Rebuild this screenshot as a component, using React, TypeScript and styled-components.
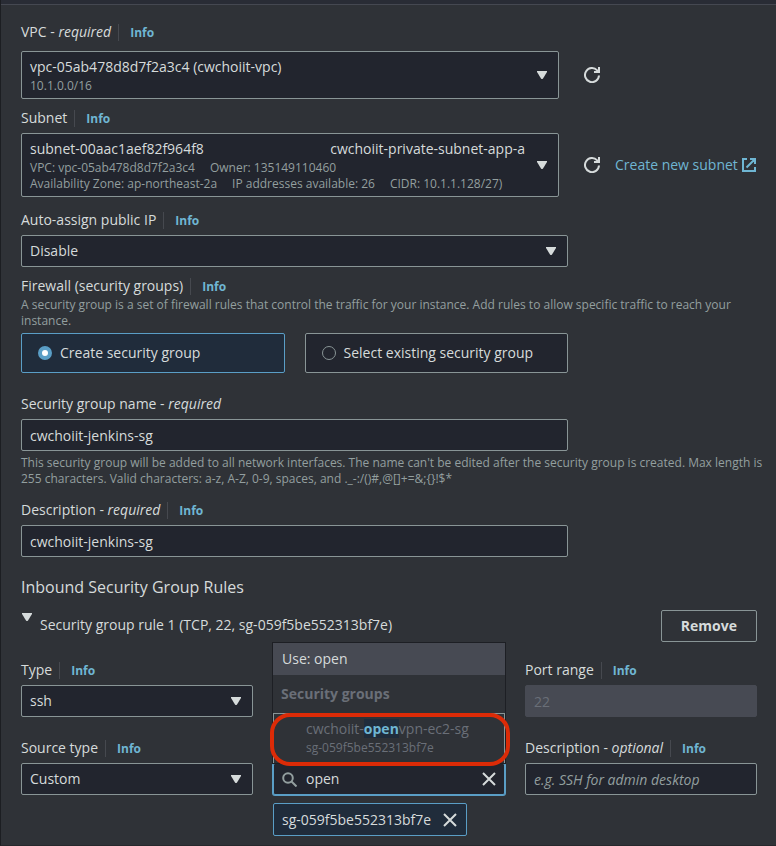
import React, { useState } from 'react';
import styled, { createGlobalStyle, css } from 'styled-components';

const color = {
  page: '#2f3237',
  field: '#22252e',
  border: '#899596',
  text: '#d6dbdb',
  muted: '#939f9f',
  dim: '#6a6f78',
  link: '#6fb6d3',
  accent: '#5a9ec6',
  selected: '#202c3b',
  raised: '#474a53',
  divider: '#46494f',
};

const GlobalStyle = createGlobalStyle`
  * { box-sizing: border-box; }
  body {
    margin: 0;
    background: ${color.page};
    color: ${color.text};
    font: 500 14px/20px "Open Sans", "Noto Sans", sans-serif;
  }
  button, input, select { font: inherit; color: inherit; margin: 0; }
`;

const Panel = styled.main`
  min-height: 100vh;
  border-left: 1px solid #1c1e22;
  border-bottom: 1px solid #26282c;
`;

const TopEdge = styled.div`
  height: 5px;
  background: #292c35;
  border-bottom: 1px solid #454851;
`;

const Form = styled.form`
  padding: 17px 19px 8px 20px;
  display: flex;
  flex-direction: column;
`;

const Field = styled.div<{ $gap?: number; $after?: number }>`
  display: flex;
  flex-direction: column;
  gap: ${(p) => p.$gap ?? 5}px;
  margin-bottom: ${(p) => p.$after ?? 0}px;
  min-width: 0;
`;

const LabelRow = styled.div`
  display: flex;
  align-items: center;
  height: 20px;
  white-space: nowrap;
`;

const InfoLink = styled.a`
  display: flex;
  align-items: center;
  height: 17px;
  margin-left: 7px;
  padding: 2px 0 0 11px;
  border-left: 1px solid ${color.divider};
  color: ${color.link};
  font-size: 12px;
  font-weight: 700;
  text-decoration: none;
`;

const Help = styled.p`
  margin: 0 -8px 0 0;
  color: ${color.muted};
  font-size: 12px;
  line-height: 16px;
`;

const Quarters = styled.div`
  display: grid;
  grid-template-columns: repeat(4, minmax(0, 1fr));
  column-gap: 20px;
`;

const ThreeQuarters = styled.div`
  grid-column: span 3;
  display: flex;
  flex-direction: column;
`;

const PickerRow = styled.div`
  display: grid;
  grid-template-columns: minmax(0, 538fr) minmax(0, 198fr);
  align-items: center;
`;

const Actions = styled.div`
  display: flex;
  align-items: center;
  gap: 15px;
  padding-left: 25px;
  white-space: nowrap;
`;

const boxed = css`
  border: 1px solid ${color.border};
  border-radius: 2px;
  background: ${color.field};
`;

const Picker = styled.button`
  ${boxed}
  display: flex;
  align-items: center;
  width: 100%;
  padding: 4px 11px 4px 8px;
  text-align: left;
`;

const PickerBody = styled.span`
  flex: 1;
  min-width: 0;
  margin-right: 12px;
  display: flex;
  flex-direction: column;
`;

const PickerTitle = styled.span`
  display: flex;
  justify-content: space-between;
  line-height: 22px;
`;

const PickerMeta = styled.span`
  display: flex;
  gap: 15px;
  color: ${color.muted};
  font-size: 12px;
  line-height: 16px;
  white-space: nowrap;
`;

const SelectWrap = styled.div`
  display: grid;
  align-items: center;
  > * { grid-area: 1 / 1; }
  > svg { justify-self: end; margin-right: 12px; pointer-events: none; }
`;

const Select = styled.select`
  ${boxed}
  appearance: none;
  width: 100%;
  height: 32px;
  padding: 0 32px 0 8px;
`;

const TextInput = styled.input`
  ${boxed}
  width: 100%;
  height: 32px;
  padding: 0 8px;
  &::placeholder { color: ${color.muted}; font-style: italic; font-weight: 400; opacity: 1; }
  &:disabled { background: ${color.raised}; border-color: ${color.raised}; color: ${color.dim}; }
`;

const IconButton = styled.button`
  display: flex;
  padding: 0;
  border: 0;
  background: none;
`;

const CreateLink = styled.a`
  display: flex;
  align-items: center;
  gap: 4px;
  color: ${color.link};
  text-decoration: none;
`;

const Tiles = styled.div`
  display: grid;
  grid-template-columns: repeat(2, minmax(0, 1fr));
  gap: 20px;
  margin-bottom: 21px;
`;

const Tile = styled.label<{ $on: boolean }>`
  ${boxed}
  display: flex;
  align-items: center;
  gap: 8px;
  height: 40px;
  padding: 0 16px;
  white-space: nowrap;
  ${(p) => p.$on && css`background: ${color.selected}; border-color: ${color.accent};`}
`;

const Radio = styled.input`
  appearance: none;
  width: 14px;
  height: 14px;
  margin: 0;
  border: 1px solid ${color.border};
  border-radius: 50%;
  &:checked { border: 4px solid ${color.accent}; background: #fff; }
`;

const Heading = styled.h3`
  margin: 0 0 13px;
  font-size: 16px;
  font-weight: 500;
  line-height: 20px;
`;

const RuleHeader = styled.div`
  display: flex;
  justify-content: space-between;
  align-items: center;
  margin-bottom: 18px;
`;

const RuleToggle = styled.button`
  display: flex;
  gap: 8px;
  align-items: flex-start;
  padding: 1px 0 5px 1px;
  border: 0;
  background: none;
  font-weight: 400;
`;

const RuleTitle = styled.span`
  padding-top: 2px;
`;

const RemoveButton = styled.button`
  height: 32px;
  padding: 0 19px;
  border: 1px solid ${color.border};
  border-radius: 2px;
  background: none;
  font-weight: 700;
`;

const RuleGrid = styled.div<{ $after: number }>`
  display: grid;
  grid-template-columns: repeat(3, minmax(0, 1fr));
  column-gap: 20px;
  align-items: end;
  margin-bottom: ${(p) => p.$after}px;
`;

const Cell = styled.div<{ $col: number }>`
  grid-column: ${(p) => p.$col};
  min-width: 0;
`;

const Combo = styled.div`
  position: relative;
`;

const SearchBox = styled.div`
  display: flex;
  align-items: center;
  gap: 9px;
  height: 32px;
  padding: 0 8px;
  border: 1px solid ${color.accent};
  border-radius: 2px;
  box-shadow: 0 0 0 1px ${color.accent};
  background: ${color.field};
`;

const SearchInput = styled.input`
  flex: 1;
  min-width: 0;
  padding: 0;
  border: 0;
  outline: 0;
  background: none;
`;

const Menu = styled.div`
  position: absolute;
  left: 0;
  right: 0;
  bottom: 100%;
  background: ${color.page};
  box-shadow: 0 0 0 1px #1d1f24;
`;

const MenuUse = styled.div`
  padding: 6px 9px;
  background: ${color.raised};
`;

const MenuGroup = styled.div`
  padding: 9px 8px;
  color: ${color.dim};
  font-weight: 700;
`;

const MenuOption = styled.div`
  display: flex;
  flex-direction: column;
  padding: 4px 32px 7px;
  border: 1px solid ${color.border};
  border-bottom: 0;
  color: ${color.dim};
  font-weight: 400;
  line-height: 22px;
`;

const Match = styled.mark`
  background: ${color.selected};
  color: ${color.link};
  font-weight: 700;
`;

const OptionId = styled.span`
  font-size: 12px;
  line-height: 16px;
`;

const Ring = styled.div`
  position: absolute;
  left: -3px;
  right: -5px;
  bottom: -3px;
  height: 53px;
  border: 4px solid #dc2b07;
  border-radius: 20px;
  pointer-events: none;
`;

const Token = styled.div`
  display: inline-flex;
  align-items: center;
  gap: 12px;
  height: 33px;
  padding: 0 9px 0 8px;
  border: 1px solid ${color.accent};
  border-radius: 2px;
  background: ${color.selected};
  white-space: nowrap;
`;

const Caret = () => (
  <svg width="10" height="8" viewBox="0 0 10 8" aria-hidden="true">
    <path d="M0 0h10v1L6 7.4q-1 1.2-2 0L0 1z" fill={color.text} />
  </svg>
);

const Refresh = () => (
  <svg width="16" height="16" viewBox="0 0 16 16" fill="none" stroke={color.text} strokeWidth="2" aria-hidden="true">
    <path d="M15 8.5A7 7 0 1 1 13.2 3.4L14.6 5" />
    <path d="M10 5h5V0" />
  </svg>
);

const External = () => (
  <svg width="14" height="14" viewBox="0 0 14 14" fill="none" stroke={color.link} strokeWidth="2" aria-hidden="true">
    <path d="M5 1H1v12h12V9M8 1h5v5M12.5 1.5L4.5 9.5" />
  </svg>
);

const Search = () => (
  <svg width="15" height="15" viewBox="0 0 15 15" fill="none" stroke={color.muted} strokeWidth="2" aria-hidden="true">
    <circle cx="6" cy="6" r="4.8" />
    <path d="M9.5 9.5l5 5" />
  </svg>
);

const Close = () => (
  <svg width="14" height="14" viewBox="0 0 14 14" fill="none" stroke={color.text} strokeWidth="2" aria-hidden="true">
    <path d="M1 1l12 12M13 1L1 13" />
  </svg>
);

type LabelProps = { text: string; note?: string; htmlFor?: string; info?: boolean };

const Label = ({ text, note, htmlFor, info = true }: LabelProps) => (
  <LabelRow>
    <label htmlFor={htmlFor}>
      {text}
      {note && <> - <em>{note}</em></>}
    </label>
    {info && <InfoLink href="#info">Info</InfoLink>}
  </LabelRow>
);

const Dropdown = ({ id, value }: { id: string; value: string }) => (
  <SelectWrap>
    <Select id={id} defaultValue={value}>
      <option>{value}</option>
    </Select>
    <Caret />
  </SelectWrap>
);

export default function App() {
  const [mode, setMode] = useState('create');
  const [query, setQuery] = useState('open');

  return (
    <>
      <GlobalStyle />
      <Panel>
        <TopEdge />
        <Form>
          <Field $gap={9} $after={9}>
            <Label text="VPC" note="required" htmlFor="vpc" />
            <PickerRow>
              <Picker id="vpc" type="button" aria-haspopup="listbox">
                <PickerBody>
                  <PickerTitle>vpc-05ab478d8d7f2a3c4 (cwchoiit-vpc)</PickerTitle>
                  <PickerMeta>10.1.0.0/16</PickerMeta>
                </PickerBody>
                <Caret />
              </Picker>
              <Actions>
                <IconButton type="button" aria-label="Refresh VPCs"><Refresh /></IconButton>
              </Actions>
            </PickerRow>
          </Field>

          <Field $after={13}>
            <Label text="Subnet" htmlFor="subnet" />
            <PickerRow>
              <Picker id="subnet" type="button" aria-haspopup="listbox">
                <PickerBody>
                  <PickerTitle>
                    <span>subnet-00aac1aef82f964f8</span>
                    <span>cwchoiit-private-subnet-app-a</span>
                  </PickerTitle>
                  <PickerMeta>
                    <span>VPC: vpc-05ab478d8d7f2a3c4</span>
                    <span>Owner: 135149110460</span>
                  </PickerMeta>
                  <PickerMeta>
                    <span>Availability Zone: ap-northeast-2a</span>
                    <span>IP addresses available: 26</span>
                    <span>CIDR: 10.1.1.128/27)</span>
                  </PickerMeta>
                </PickerBody>
                <Caret />
              </Picker>
              <Actions>
                <IconButton type="button" aria-label="Refresh subnets"><Refresh /></IconButton>
                <CreateLink href="#create-subnet">Create new subnet <External /></CreateLink>
              </Actions>
            </PickerRow>
          </Field>

          <Quarters>
            <ThreeQuarters>
              <Field $after={9}>
                <Label text="Auto-assign public IP" htmlFor="public-ip" />
                <Dropdown id="public-ip" value="Disable" />
              </Field>
            </ThreeQuarters>
          </Quarters>

          <Field $gap={1} $after={4}>
            <Label text="Firewall (security groups)" />
            <Help>
              A security group is a set of firewall rules that control the traffic for your instance. Add rules to
              allow specific traffic to reach your instance.
            </Help>
          </Field>

          <Quarters>
            <ThreeQuarters>
              <Tiles role="radiogroup" aria-label="Firewall (security groups)">
                <Tile $on={mode === 'create'}>
                  <Radio type="radio" name="firewall" checked={mode === 'create'} onChange={() => setMode('create')} />
                  Create security group
                </Tile>
                <Tile $on={mode === 'existing'}>
                  <Radio type="radio" name="firewall" checked={mode === 'existing'} onChange={() => setMode('existing')} />
                  Select existing security group
                </Tile>
              </Tiles>
              <Field $after={4}>
                <Label text="Security group name" note="required" htmlFor="sg-name" info={false} />
                <TextInput id="sg-name" defaultValue="cwchoiit-jenkins-sg" />
              </Field>
            </ThreeQuarters>
          </Quarters>
          <Field $after={13}>
            <Help>
              This security group will be added to all network interfaces. The name can't be edited after the security
              group is created. Max length is 255 characters. Valid characters: a-z, A-Z, 0-9, spaces, and
              {' ._-:/()#,@[]+=&;{}!$*'}
            </Help>
          </Field>

          <Quarters>
            <ThreeQuarters>
              <Field $after={20}>
                <Label text="Description" note="required" htmlFor="sg-desc" />
                <TextInput id="sg-desc" defaultValue="cwchoiit-jenkins-sg" />
              </Field>
            </ThreeQuarters>
          </Quarters>

          <Heading>Inbound Security Group Rules</Heading>
          <RuleHeader>
            <RuleToggle type="button" aria-expanded="true">
              <Caret />
              <RuleTitle>Security group rule 1 (TCP, 22, sg-059f5be552313bf7e)</RuleTitle>
            </RuleToggle>
            <RemoveButton type="button">Remove</RemoveButton>
          </RuleHeader>

          <RuleGrid $after={21}>
            <Cell $col={1}>
              <Field>
                <Label text="Type" htmlFor="rule-type" />
                <Dropdown id="rule-type" value="ssh" />
              </Field>
            </Cell>
            <Cell $col={3}>
              <Field>
                <Label text="Port range" htmlFor="port" />
                <TextInput id="port" value="22" disabled readOnly />
              </Field>
            </Cell>
          </RuleGrid>

          <RuleGrid $after={8}>
            <Cell $col={1}>
              <Field>
                <Label text="Source type" htmlFor="source-type" />
                <Dropdown id="source-type" value="Custom" />
              </Field>
            </Cell>
            <Cell $col={2}>
              <Combo>
                <SearchBox>
                  <Search />
                  <SearchInput aria-label="Source" value={query} onChange={(e) => setQuery(e.target.value)} />
                  <IconButton type="button" aria-label="Clear source" onClick={() => setQuery('')}><Close /></IconButton>
                </SearchBox>
                <Menu role="listbox" aria-label="Source suggestions">
                  <MenuUse role="option">Use: open</MenuUse>
                  <MenuGroup>Security groups</MenuGroup>
                  <MenuOption role="option" aria-disabled="true">
                    <span>cwchoiit-<Match>open</Match>vpn-ec2-sg</span>
                    <OptionId>sg-059f5be552313bf7e</OptionId>
                  </MenuOption>
                  <Ring />
                </Menu>
              </Combo>
            </Cell>
            <Cell $col={3}>
              <Field>
                <Label text="Description" note="optional" htmlFor="rule-desc" />
                <TextInput id="rule-desc" placeholder="e.g. SSH for admin desktop" />
              </Field>
            </Cell>
          </RuleGrid>

          <RuleGrid $after={0}>
            <Cell $col={2}>
              <Token>
                sg-059f5be552313bf7e
                <IconButton type="button" aria-label="Remove sg-059f5be552313bf7e"><Close /></IconButton>
              </Token>
            </Cell>
          </RuleGrid>
        </Form>
      </Panel>
    </>
  );
}
